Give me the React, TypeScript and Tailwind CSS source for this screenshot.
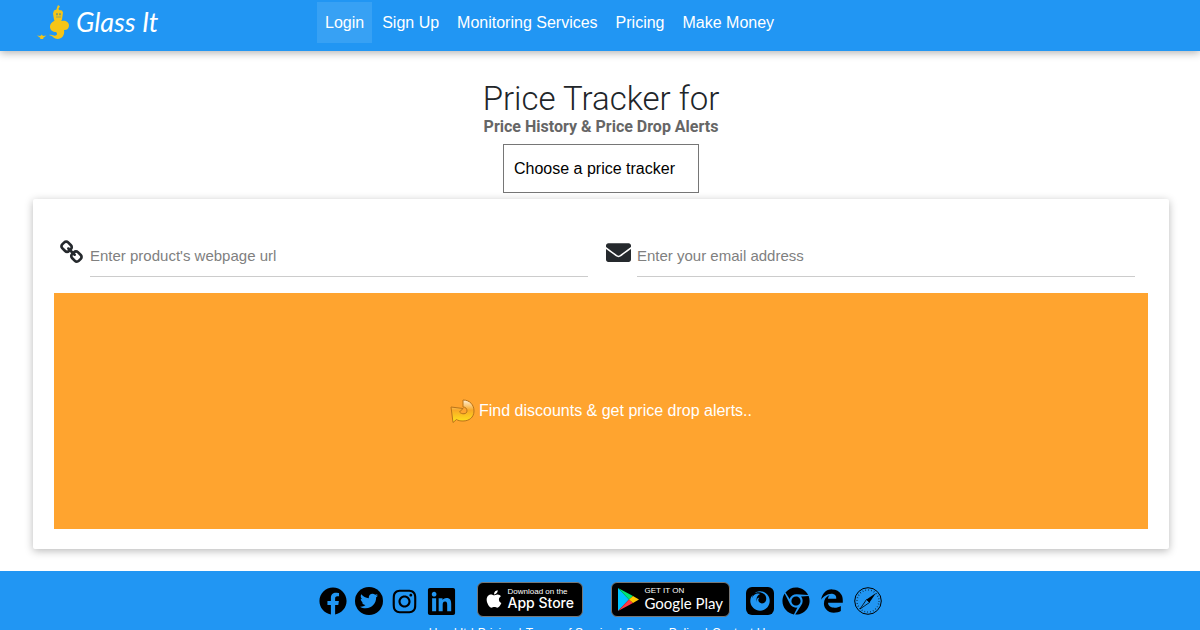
import React from 'react'
import { FaApple, FaChrome, FaEdgeLegacy, FaEnvelope, FaFacebook, FaFirefox, FaInstagram, FaLinkedin, FaTwitter } from 'react-icons/fa'

const navItems = ['Login', 'Sign Up', 'Monitoring Services', 'Pricing', 'Make Money']
const footerLinks = ['Used It', 'Pricing', 'Terms of Service', 'Privacy Policy', 'Contact Us']

export default function App() {
    return (
        <div className="flex min-h-screen flex-col bg-white font-['Liberation_Sans',Arial,sans-serif] text-black">
            <Header />

            <main className="flex flex-col pt-7 pr-[31px] pb-[22px] pl-[33px]">
                <div className="flex flex-col items-center">
                    <h1 className="font-['Roboto',sans-serif] text-[33px] leading-10 font-light text-[#212529]">Price Tracker for</h1>
                    <h2 className="font-['Roboto',sans-serif] text-base leading-4 font-bold text-[#666]">Price History &amp; Price Drop Alerts</h2>
                    <select
                        aria-label="Price tracker"
                        className="mt-[9px] h-[49px] w-[196px] appearance-none border border-[#767676] bg-white px-2.5 text-base"
                    >
                        <option>Choose a price tracker</option>
                    </select>
                </div>
                <TrackerForm />
            </main>

            <Footer />
        </div>
    )
}

function Header() {
    return (
        <header className="flex bg-[#2196f3] pb-2 pl-9 text-white shadow-[0_2px_8px_rgba(0,0,0,0.3)]">
            <a href="#" className="flex h-[43px] w-[281px] items-center">
                <GenieLogo />
                <span className="ml-1 font-['Lato',cursive] text-[27px] leading-8 italic">Glass It</span>
            </a>
            <nav className="flex gap-0.5 pt-0.5">
                {navItems.map((item, i) => (
                    <a key={item} href="#" className={`px-2 py-2 text-base leading-[25px] ${i === 0 ? 'bg-white/10' : ''}`}>
                        {item}
                    </a>
                ))}
            </nav>
        </header>
    )
}

function TrackerForm() {
    return (
        <form
            onSubmit={(e) => e.preventDefault()}
            className="mt-1.5 rounded-xs bg-white px-[21px] pt-9 pb-5 shadow-[0_2px_8px_rgba(0,0,0,0.28)]"
        >
            <div className="grid grid-cols-2">
                <Field id="url" type="url" label="Enter product's webpage url" icon={<ChainIcon />} />
                <Field id="email" type="email" label="Enter your email address" icon={<FaEnvelope size={25} />} />
            </div>
            <button type="submit" className="mt-4 flex h-[236px] w-full items-center justify-center gap-1 bg-[#ffa42f] text-base text-white">
                <ArrowIcon />
                Find discounts &amp; get price drop alerts..
            </button>
        </form>
    )
}

function Field({ id, type, label, icon }: { id: string, type: string, label: string, icon: React.ReactNode }) {
    return (
        <div className="flex pr-[13px] pl-[5px]">
            <label htmlFor={id} aria-label={label} className="w-[31px] shrink-0 pt-[5px] text-[#25292d]">{icon}</label>
            <input
                id={id}
                type={type}
                placeholder={label}
                className="h-[42px] min-w-0 flex-1 border-b border-[#ccc] text-[15px] outline-none placeholder:text-[#808080]"
            />
        </div>
    )
}

function Footer() {
    return (
        <footer className="flex flex-col items-center bg-[#2196f3] pt-2 pb-4">
            <div className="flex h-11 items-center text-black">
                <div className="flex items-center gap-2">
                    <a href="#" aria-label="Facebook"><FaFacebook size={28} /></a>
                    <a href="#" aria-label="Twitter" className="flex size-7 items-center justify-center rounded-full bg-black text-[#2196f3]">
                        <FaTwitter size={18} />
                    </a>
                    <a href="#" aria-label="Instagram"><FaInstagram size={27} /></a>
                    <a href="#" aria-label="LinkedIn"><FaLinkedin size={31} /></a>
                </div>
                <a href="#" className="mb-1 ml-5 flex h-[35px] w-[106px] items-center gap-1 rounded-md border border-[#777] bg-black pl-1.5 whitespace-nowrap text-white">
                    <FaApple size={20} />
                    <span className="flex flex-col">
                        <span className="text-[8px] leading-2">Download on the</span>
                        <span className="font-['Inter',sans-serif] text-sm leading-[14px] font-medium">App Store</span>
                    </span>
                </a>
                <a href="#" className="mb-1 ml-7 flex h-[35px] w-[119px] items-center gap-1.5 rounded-md border border-[#777] bg-black pl-1.5 whitespace-nowrap text-white">
                    <PlayIcon />
                    <span className="flex flex-col">
                        <span className="text-[8px] leading-2">GET IT ON</span>
                        <span className="font-['Lato',sans-serif] text-[15px] leading-4">Google Play</span>
                    </span>
                </a>
                <div className="ml-4 flex items-center gap-2">
                    <a href="#" aria-label="Firefox" className="flex size-7 items-center justify-center rounded-md bg-black text-[#2196f3]">
                        <FaFirefox size={20} />
                    </a>
                    <a href="#" aria-label="Chrome"><FaChrome size={28} /></a>
                    <a href="#" aria-label="Edge" className="px-0.5"><FaEdgeLegacy size={24} /></a>
                    <a href="#" aria-label="Safari"><CompassIcon /></a>
                </div>
            </div>
            <nav className="mt-0.5 flex gap-1 text-xs leading-4 text-white">
                {footerLinks.map((item, i) => (
                    <React.Fragment key={item}>
                        {i > 0 && <span>|</span>}
                        <a href="#">{item}</a>
                    </React.Fragment>
                ))}
            </nav>
        </footer>
    )
}

function GenieLogo() {
    return (
        <svg width="36" height="36" viewBox="0 0 36 36" fill="#f5c518">
            <path d="M22 1l2 1.500-1.500 2 .5 1.500 3 .5 1 2-1 7-1.500 2h-5l-1.500-2-1-6 1-3 2.500-1 .5-2z" />
            <path d="M19 16c3-1 6 0 7 1 3-1 7 1 7 4.500s-3 5-5 4.500c1 5-2 9-6.500 9-3.500 0-4-3-8.500-4 4-1 5 2 7.500 0 1-1 .5-2-.5-3-3 0-6-2-6-5 0-4 3-5 5-7z" />
            <path d="M1 31.500l3 .5 1-.5.5-1 1 1 1 .5 3-.5-3.500 2.500.5 1H4l.5-1z" />
            <path d="M20.500 9.500h1v1.500h-1zM23.500 9.500h1v1.500h-1zM20 13h5" stroke="#2d86b4" strokeWidth="0.500" />
        </svg>
    )
}

function ChainIcon() {
    return (
        <svg width="25" height="25" viewBox="0 0 1792 1792" fill="currentColor">
            <path d="M1520 1216q0-40-28-68l-208-208q-28-28-68-28-42 0-72 32 3 3 19 18.5t21.5 21.5 15 19 13 25.5 3.5 27.5q0 40-28 68t-68 28q-15 0-27.5-3.5t-25.5-13-19-15-21.5-21.5-18.5-19q-33 31-33 73 0 40 28 68l206 207q27 27 68 27 40 0 68-26l147-146q28-28 28-67zm-703-705q0-40-28-68l-206-207q-28-28-68-28-39 0-68 27l-147 146q-28 28-28 67 0 40 28 68l208 208q27 27 68 27 42 0 72-31-3-3-19-18.5t-21.5-21.5-15-19-13-25.5-3.5-27.5q0-40 28-68t68-28q15 0 27.5 3.5t25.5 13 19 15 21.5 21.5 18.5 19q33-31 33-73zm895 705q0 120-85 203l-147 146q-83 83-203 83-121 0-204-85l-206-207q-83-83-83-203 0-123 88-209l-88-88q-86 88-208 88-120 0-204-84l-208-208q-84-84-84-204t85-203l147-146q83-83 203-83 121 0 204 85l206 207q83 83 83 203 0 123-88 209l88 88q86-88 208-88 120 0 204 84l208 208q84 84 84 204z" />
        </svg>
    )
}

function ArrowIcon() {
    return (
        <svg width="25" height="25" viewBox="0 0 25 25">
            <defs>
                <linearGradient id="arrow" x1="0" y1="0" x2="0" y2="1">
                    <stop offset="0" stopColor="#fff0d8" />
                    <stop offset="0.450" stopColor="#f9a825" />
                    <stop offset="1" stopColor="#ffe61c" />
                </linearGradient>
            </defs>
            <path d="M13 1C20 1 24 6 24 12c0 6.500-5 10-11 10-3 0-5-.5-6.500-1.500L3 23.500 1 8l12 1.500-3.500 3.500c2 2.500 7.500 2.500 7.500-1 0-2.500-1.500-4-4-4z" fill="url(#arrow)" stroke="#b8741a" strokeWidth="1" strokeLinejoin="round" />
        </svg>
    )
}

function PlayIcon() {
    return (
        <svg width="21" height="23" viewBox="0 0 21 23">
            <path d="M0 0v23l11-11.500z" fill="#00c3ff" />
            <path d="M0 0l15 8-4 3.500z" fill="#00e676" />
            <path d="M0 23l15-8-4-3.500z" fill="#ff3a44" />
            <path d="M15 8l6 3.500-6 3.500-4-3.500z" fill="#ffc800" />
        </svg>
    )
}

function CompassIcon() {
    return (
        <svg width="28" height="28" viewBox="0 0 28 28" fill="none" stroke="black">
            <circle cx="14" cy="14" r="13.300" strokeWidth="1" />
            <circle cx="14" cy="14" r="11" strokeWidth="1.500" strokeDasharray="0.500 2.380" />
            <path d="M22 6l-6.500 9.500-3-3z" fill="black" stroke="none" />
            <path d="M6 22l6.500-9.500 3 3z" strokeWidth="0.800" />
        </svg>
    )
}
